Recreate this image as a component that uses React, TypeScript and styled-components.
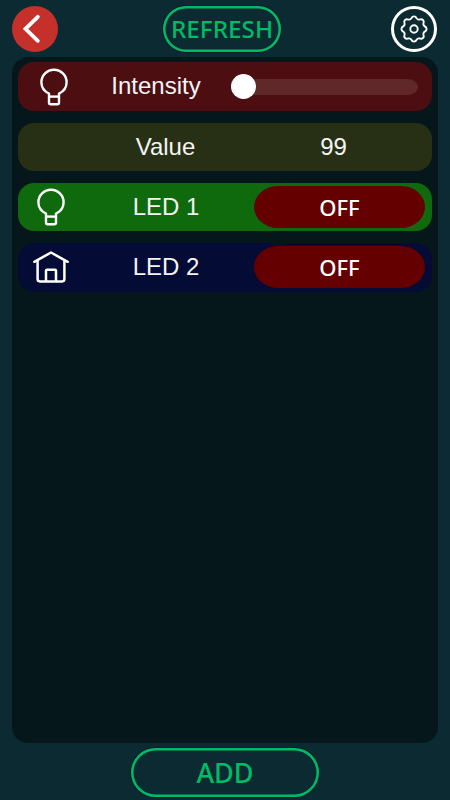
import React from 'react';
import styled, { createGlobalStyle } from 'styled-components';

const GlobalStyle = createGlobalStyle`
  * { box-sizing: border-box; }
  body { margin: 0; background: #0b2a31; }
  button { font: inherit; border: 0; padding: 0; background: none; cursor: pointer; }
  svg { display: block; overflow: visible; }
`;

const Screen = styled.div`
  width: 450px;
  height: 800px;
  display: flex;
  flex-direction: column;
  align-items: center;
  padding: 6px 12px 0;
  background: #0b2a31;
  font-family: 'Liberation Sans', sans-serif;
  overflow: hidden;
`;

const Header = styled.header`
  width: 100%;
  height: 51px;
  display: grid;
  grid-template-columns: 151px 228px 46px;
`;

const RoundButton = styled.button<{ $filled?: boolean }>`
  width: 46px;
  height: 46px;
  border-radius: 50%;
  display: grid;
  place-items: center;
  color: #fff;
  ${(p) => (p.$filled ? 'background: #c5302a;' : 'border: 3px solid #fff;')}
`;

const OutlineButton = styled.button<{ $width: number; $height: number; $size: number }>`
  width: ${(p) => p.$width}px;
  height: ${(p) => p.$height}px;
  box-shadow: inset 0 0 0 2.5px #00ba66, 0 0 0 1px rgba(4, 16, 40, 0.5);
  border-radius: 25px;
  display: flex;
  align-items: center;
  justify-content: center;
  color: #00ba66;
  font-family: 'Noto Sans', sans-serif;
  font-size: ${(p) => p.$size}px;
  font-weight: 500;
  line-height: 1;
  white-space: nowrap;
`;

const Panel = styled.main`
  width: 426px;
  height: 686px;
  flex: none;
  display: flex;
  flex-direction: column;
  gap: 11.8px;
  padding: 5.3px 6px;
  margin-bottom: 5px;
  border-radius: 16px;
  background: #06171c;
`;

const Row = styled.section<{ $color: string }>`
  height: 48.5px;
  flex: none;
  display: grid;
  grid-template-columns: 66px 164px 184px;
  align-items: center;
  border-radius: 16px;
  background: ${(p) => p.$color};
`;

const IconCell = styled.div<{ $shift?: number }>`
  display: flex;
  justify-content: center;
  padding-left: ${(p) => p.$shift ?? 0}px;
  color: #fff;
`;

const Label = styled.div<{ $shift?: number }>`
  text-align: center;
  color: #f4f4f4;
  font-size: 24px;
  line-height: 48.5px;
  padding-right: ${(p) => p.$shift ?? 0}px;
`;

const Reading = styled(Label)`
  padding-right: 13px;
`;

const Slider = styled.div`
  width: 187px;
  height: 25px;
  display: flex;
  align-items: center;
  margin-left: -17px;
`;

const Thumb = styled.div`
  width: 25px;
  height: 25px;
  flex: none;
  border-radius: 50%;
  margin-right: -12px;
  z-index: 1;
  background: #fff;
`;

const Track = styled.div`
  flex: 1;
  height: 16px;
  border-radius: 0 11px 11px 0 / 0 8px 8px 0;
  background: #602829;
`;

const Toggle = styled.button`
  width: 171px;
  height: 42px;
  margin-left: 6px;
  border-radius: 24px / 21px;
  background: #640000;
  color: #fff;
  font-family: 'Noto Sans', sans-serif;
  font-size: 22px;
  font-weight: 500;
  line-height: 42px;
`;

const Bulb = () => (
  <svg width="28" height="38" viewBox="0 0 28 38" fill="none" stroke="currentColor" strokeWidth="2.400" strokeLinejoin="round">
    <path d="M9 28v-2.400C4.500 23.500 1.400 19.500 1.400 14.300a12.600 12.600 0 0 1 25.200 0c0 5.200-3.100 9.200-7.600 11.300v9.400c0 .7-.5 1.200-1.200 1.200h-7.600c-.7 0-1.200-.5-1.200-1.200Z" />
    <path d="M9 28.600h10" />
  </svg>
);

const House = () => (
  <svg width="36" height="32" viewBox="0 0 36 32" fill="none" stroke="currentColor" strokeWidth="2.500" strokeLinecap="round" strokeLinejoin="round">
    <path d="M1.300 10.800 18 1.500l16.700 9.300" />
    <path d="M4.600 9.500v18.600c0 1.500.8 2.300 2.300 2.300h22.200c1.500 0 2.300-.8 2.300-2.300V9.500" />
    <path d="M13 30V19.800c0-.6.400-1 1-1h8c.6 0 1 .4 1 1V30" />
  </svg>
);

const Gear = () => (
  <svg width="28" height="28" viewBox="-14 -14 28 28" fill="none" stroke="currentColor" strokeWidth="1.900" strokeLinejoin="round">
    <path d="M10.900-2.500A2.700 2.700 0 0 1 10.900 2.500A3 3 0 0 0 9.500 5.900A2.700 2.700 0 0 1 5.900 9.500A3 3 0 0 0 2.500 10.900A2.700 2.700 0 0 1-2.500 10.900A3 3 0 0 0-5.900 9.500A2.700 2.700 0 0 1-9.500 5.900A3 3 0 0 0-10.900 2.500A2.700 2.700 0 0 1-10.900-2.500A3 3 0 0 0-9.500-5.900A2.700 2.700 0 0 1-5.900-9.500A3 3 0 0 0-2.500-10.900A2.700 2.700 0 0 1 2.500-10.900A3 3 0 0 0 5.900-9.500A2.700 2.700 0 0 1 9.500-5.900A3 3 0 0 0 10.900-2.500Z" />
    <circle r="3.700" />
  </svg>
);

const Chevron = () => (
  <svg width="46" height="46" viewBox="0 0 46 46" fill="none" stroke="currentColor" strokeWidth="3.800" strokeLinecap="round">
    <path d="M25.800 10.800 13.500 22.800 25.800 34.800" strokeLinejoin="miter" />
  </svg>
);

export default function App() {
  return (
    <Screen>
      <GlobalStyle />
      <Header>
        <RoundButton $filled aria-label="Back"><Chevron /></RoundButton>
        <OutlineButton $width={118} $height={46} $size={24.3}>REFRESH</OutlineButton>
        <RoundButton aria-label="Settings"><Gear /></RoundButton>
      </Header>
      <Panel>
        <Row $color="#4d0e12">
          <IconCell $shift={5}><Bulb /></IconCell>
          <Label $shift={20}>Intensity</Label>
          <Slider>
            <Thumb />
            <Track />
          </Slider>
        </Row>
        <Row $color="#272f15">
          <IconCell />
          <Label $shift={1}>Value</Label>
          <Reading>99</Reading>
        </Row>
        <Row $color="#0e6a0d">
          <IconCell><Bulb /></IconCell>
          <Label>LED 1</Label>
          <Toggle>OFF</Toggle>
        </Row>
        <Row $color="#040b34">
          <IconCell><House /></IconCell>
          <Label>LED 2</Label>
          <Toggle>OFF</Toggle>
        </Row>
      </Panel>
      <OutlineButton $width={188} $height={49} $size={27}>ADD</OutlineButton>
    </Screen>
  );
}
